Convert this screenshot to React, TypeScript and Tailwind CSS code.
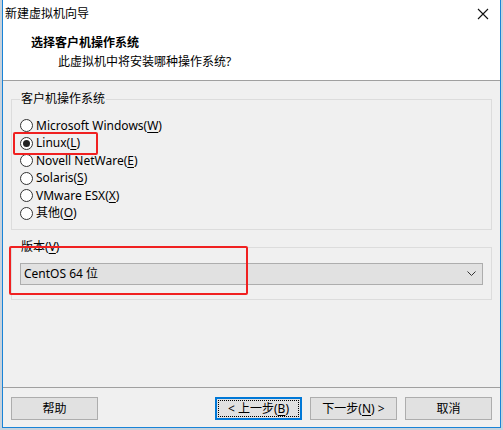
import React from 'react';

const FONT = '"Noto Sans", "Noto Sans CJK SC", sans-serif';

const OS_OPTIONS = [
  { label: 'Microsoft Windows', key: 'W' },
  { label: 'Linux', key: 'L', checked: true },
  { label: 'Novell NetWare', key: 'E' },
  { label: 'Solaris', key: 'S' },
  { label: 'VMware ESX', key: 'X' },
  { label: '其他', key: 'O' },
];

function Radio({ checked }: { checked?: boolean }) {
  return (
    <span className="flex h-[13px] w-[13px] items-center justify-center rounded-full border border-[#333] bg-white">
      {checked && <span className="h-[7px] w-[7px] rounded-full bg-[#222]" />}
    </span>
  );
}

function Mnemonic({ k }: { k: string }) {
  return (
    <>
      (<span className="underline underline-offset-2">{k}</span>)
    </>
  );
}

function Button({ children, focused }: { children: React.ReactNode; focused?: boolean }) {
  return (
    <button
      className={
        'flex h-[23px] w-[87px] items-center justify-center bg-[#e1e1e1] text-[12px] text-black ' +
        (focused ? 'border-2 border-[#0078d7]' : 'border border-[#adadad]')
      }
    >
      <span
        className={
          'flex h-full w-full items-center justify-center ' +
          (focused ? 'outline-1 outline-dotted outline-black -outline-offset-2' : '')
        }
      >
        {children}
      </span>
    </button>
  );
}

export default function App() {
  return (
    <div
      className="relative h-[430px] w-[503px] overflow-hidden bg-[#c8d2dc]"
      style={{ fontFamily: FONT }}
    >
      <div className="ml-[2px] flex h-[428px] w-[499px] flex-col border border-t-0 border-[#1883d7] bg-[#f0f0f0] text-black">
        {/* header */}
        <div className="h-[81px] border-b border-[#a0a0a0] bg-white">
          <div className="flex h-[27px] items-center justify-between pl-[2px] pr-[8px]">
            <span className="text-[12px] leading-none">新建虚拟机向导</span>
            <svg width="12" height="12" viewBox="0 0 12 12" className="mr-[3px]">
              <path d="M1 1L11 11M11 1L1 11" stroke="#111" strokeWidth="1.1" fill="none" />
            </svg>
          </div>
          <div className="pl-[28px] pt-[8px] text-[12px] font-bold leading-[16px]">选择客户机操作系统</div>
          <div className="pl-[55px] pt-[3px] text-[12px] leading-[16px]">此虚拟机中将安装哪种操作系统?</div>
        </div>

        {/* body */}
        <div className="flex flex-1 flex-col px-[8px] pt-[10px]">
          <fieldset className="h-[139px] w-[481px] border border-[#dcdcdc] px-[8px] pb-0">
            <legend className="px-[1px] text-[12px] leading-[16px]">客户机操作系统</legend>
            <div className="flex flex-col pt-[10px]">
              {OS_OPTIONS.map((o) => (
                <div key={o.key} className="flex h-[17.5px] items-center gap-[3px] text-[12px]">
                  <Radio checked={o.checked} />
                  <span className="leading-none">
                    {o.label}
                    <Mnemonic k={o.key} />
                  </span>
                </div>
              ))}
            </div>
          </fieldset>

          <fieldset className="mt-[9px] h-[61px] w-[481px] border border-[#dcdcdc] px-[8px]">
            <legend className="px-[1px] text-[12px] leading-[16px]">
              版本<Mnemonic k="V" />
            </legend>
            <div className="mt-[8px] flex h-[22px] items-center justify-between border border-[#adadad] bg-[#e1e1e1] pl-[3px] pr-[6px] text-[12px]">
              <span>CentOS 64 位</span>
              <svg width="9" height="6" viewBox="0 0 9 6">
                <path d="M0.5 0.5L4.5 4.5L8.5 0.5" stroke="#333" strokeWidth="1" fill="none" />
              </svg>
            </div>
          </fieldset>

          <div className="flex-1" />
        </div>

        {/* footer */}
        <div className="h-[40px] border-t border-[#a0a0a0]">
          <div className="flex items-center pl-[8px] pr-[8px] pt-[9px]">
            <Button>帮助</Button>
            <div className="flex-1" />
            <div className="flex gap-[8px]">
              <Button focused>
                &lt; 上一步<Mnemonic k="B" />
              </Button>
              <Button>
                下一步<Mnemonic k="N" /> &gt;
              </Button>
              <Button>取消</Button>
            </div>
          </div>
        </div>
      </div>

      {/* red annotation boxes */}
      <div className="absolute left-[13px] top-[132px] h-[23px] w-[85px] rounded-[2px] border-2 border-[#f02020]" />
      <div className="absolute left-[9px] top-[246px] h-[49px] w-[239px] rounded-[2px] border-2 border-[#f02020]" />
    </div>
  );
}
